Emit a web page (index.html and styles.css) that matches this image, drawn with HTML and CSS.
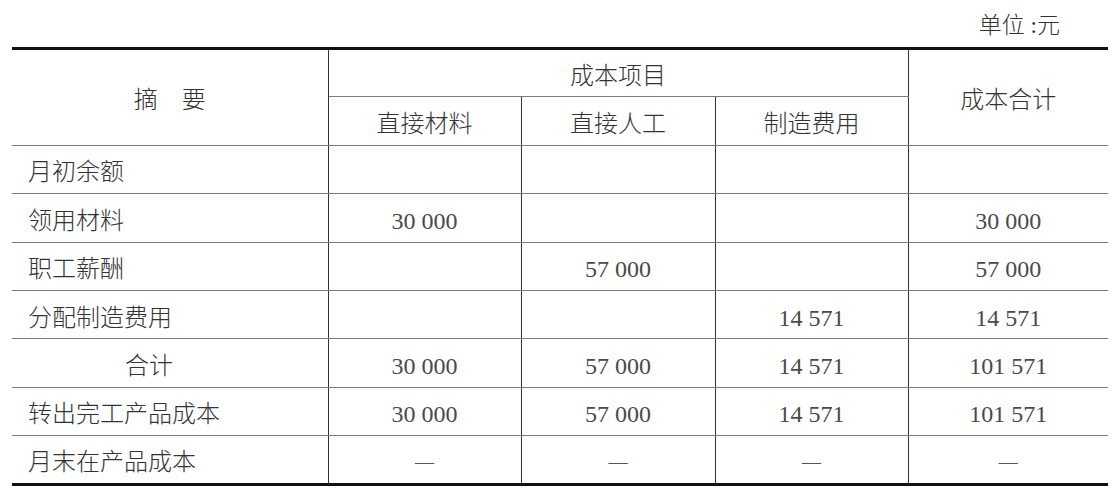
FILE: index.html
```html
<!DOCTYPE html>
<html lang="zh-CN">
<head>
<meta charset="utf-8">
<link rel="stylesheet" href="styles.css">
</head>
<body>
<div class="page">
  <div class="unit">单位 :元</div>
  <table class="cost">
    <colgroup>
      <col class="c1"><col class="c2"><col class="c3"><col class="c4"><col class="c5">
    </colgroup>
    <tr class="h1">
      <th rowspan="2" class="summary">摘　要</th>
      <th colspan="3" class="group">成本项目</th>
      <th rowspan="2" class="total">成本合计</th>
    </tr>
    <tr class="h2">
      <th>直接材料</th>
      <th>直接人工</th>
      <th>制造费用</th>
    </tr>
    <tr><td class="name">月初余额</td><td></td><td></td><td></td><td></td></tr>
    <tr><td class="name">领用材料</td><td class="num">30 000</td><td></td><td></td><td class="num">30 000</td></tr>
    <tr><td class="name">职工薪酬</td><td></td><td class="num">57 000</td><td></td><td class="num">57 000</td></tr>
    <tr><td class="name">分配制造费用</td><td></td><td></td><td class="num">14 571</td><td class="num">14 571</td></tr>
    <tr><td class="name sum">合计</td><td class="num">30 000</td><td class="num">57 000</td><td class="num">14 571</td><td class="num">101 571</td></tr>
    <tr><td class="name">转出完工产品成本</td><td class="num">30 000</td><td class="num">57 000</td><td class="num">14 571</td><td class="num">101 571</td></tr>
    <tr class="last"><td class="name">月末在产品成本</td><td class="dash">—</td><td class="dash">—</td><td class="dash">—</td><td class="dash">—</td></tr>
  </table>
</div>
</body>
</html>
```
FILE: styles.css
```css
html, body {
  margin: 0;
  padding: 0;
  background: #fff;
}
body {
  font-family: "Liberation Serif", "Noto Sans CJK SC", serif;
  color: #333;
}
.page {
  width: 1096px;
  padding: 0 10px 0 12px;
}
.unit {
  height: 47px;
  box-sizing: border-box;
  padding: 12px 48px 0 0;
  text-align: right;
  font-size: 23px;
  line-height: 28px;
  font-weight: 300;
}
.cost {
  width: 1096px;
  border-collapse: collapse;
  table-layout: fixed;
  border-top: 3px solid #111;
  border-bottom: 3px solid #111;
}
.c1 { width: 316px; }
.c2 { width: 193px; }
.c3 { width: 194px; }
.c4 { width: 193px; }
.c5 { width: 200px; }
.cost th, .cost td {
  height: 48.4px;
  padding: 6px 0 0 0;
  box-sizing: border-box;
  border-top: 1px solid #7a7a7a;
  border-bottom: 1px solid #7a7a7a;
  border-left: 1px solid #333;
  border-right: 1px solid #333;
  font-size: 24px;
  font-weight: 300;
  line-height: 30px;
  text-align: center;
  vertical-align: middle;
  color: #333;
}
.cost th:first-child, .cost td:first-child { border-left: none; }
.cost th:last-child, .cost td:last-child { border-right: none; }
.cost tr.h2 th:last-child { border-right: 1px solid #333; }
.cost tr.h1 th { border-top: 3px solid #111; }
.cost tr.last td { border-bottom: 3px solid #111; }
.cost td.name {
  text-align: left;
  padding-left: 16px;
}
.cost td.sum { padding-left: 113px; }
.cost td.num { color: #4a4a4a; }
.cost td.dash {
  font-size: 19px;
  color: #555;
}
```
